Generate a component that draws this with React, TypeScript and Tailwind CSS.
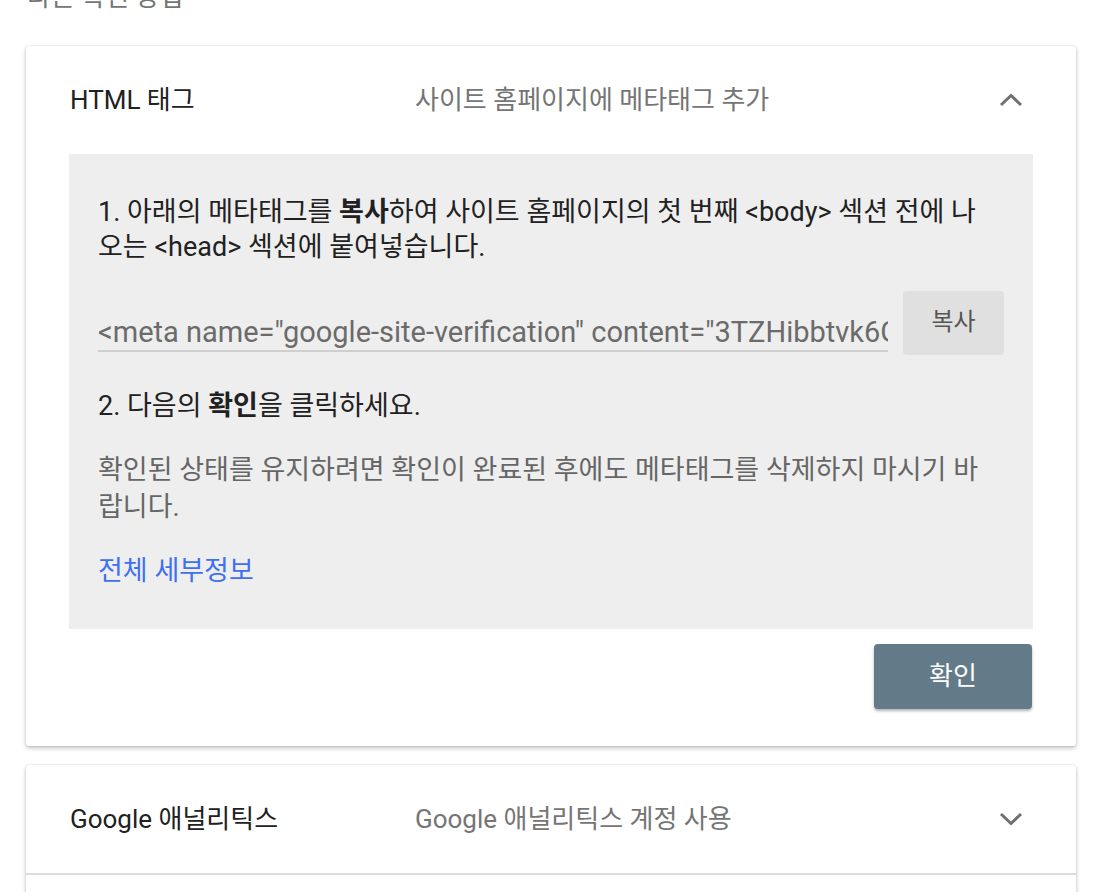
const font = "font-['Roboto','Noto_Sans_CJK_KR',sans-serif]";

function Chevron({ up }: { up?: boolean }) {
  return (
    <svg width="24" height="16" viewBox="0 0 24 16" className="text-[#707070]">
      <polyline
        points={up ? "2,13 12,3.5 22,13" : "2,3 12,12.5 22,3"}
        fill="none"
        stroke="currentColor"
        strokeWidth="3"
      />
    </svg>
  );
}

function CardHeader({ title, desc, open }: { title: string; desc: string; open?: boolean }) {
  return (
    <div className="flex h-[108px] items-center pl-[44px] pr-[53px]">
      <div className="w-[345px] text-[26px] text-[#212121]">{title}</div>
      <div className="flex-1 text-[26px] text-[#757575]">{desc}</div>
      <Chevron up={open} />
    </div>
  );
}

export default function App() {
  return (
    <div className={`${font} min-h-[892px] overflow-hidden bg-white`}>
      <div className="ml-[27px] mt-[-19px] text-[26px] leading-[32px] text-[#757575]">다른 확인 방법</div>

      {/* html tag */}
      <div className="ml-[26px] mt-[33px] w-[1050px] rounded-[3px] bg-white shadow-[0_2px_4px_rgba(0,0,0,0.25),0_0_2px_rgba(0,0,0,0.12)]">
        <CardHeader title="HTML 태그" desc="사이트 홈페이지에 메타태그 추가" open />
        <div className="mx-[43px] bg-[#eeeeee] pb-[40px] pl-[29px] pr-[20px] pt-[41px]">
          <p className="text-[27px] leading-[35px] text-[#212121]">
            <span className="block whitespace-nowrap">
              1. 아래의 메타태그를 <b className="font-bold">복사</b>하여 사이트 홈페이지의 첫 번째 &lt;body&gt; 섹션 전에 나
            </span>
            <span className="block whitespace-nowrap">오는 &lt;head&gt; 섹션에 붙여넣습니다.</span>
          </p>

          <div className="mt-[26px] flex items-start">
            <div className="w-[790px] overflow-hidden border-b-2 border-[#cfcfcf] pt-[24px]">
              <div className="whitespace-nowrap text-[29px] leading-[35px] text-[#6b6b6b]">
                &lt;meta name="google-site-verification" content="3TZHibbtvk6GxQp0d2LrWm8sN5vYcE1aFhT7uKj4oBz" /&gt;
              </div>
            </div>
            <button className="ml-[15px] h-[64px] w-[101px] rounded-[4px] bg-[#e0e0e0] pb-[2px] text-[24px] text-[#555]">복사</button>
          </div>

          <p className="mt-[34px] text-[27px] leading-[35px] text-[#212121]">
            2. 다음의 <b className="font-bold">확인</b>을 클릭하세요.
          </p>

          <p className="mt-[28px] text-[27px] leading-[37px] text-[#666666]">
            <span className="block whitespace-nowrap">확인된 상태를 유지하려면 확인이 완료된 후에도 메타태그를 삭제하지 마시기 바</span>
            <span className="block whitespace-nowrap">랍니다.</span>
          </p>

          <a className="mt-[28px] block text-[27px] leading-[35px] text-[#3f6ff2]">전체 세부정보</a>
        </div>
        <div className="flex justify-end pb-[37px] pr-[44px] pt-[15px]">
          <button className="h-[65px] w-[158px] rounded-[4px] bg-[#637b89] text-[26px] text-white shadow-[0_2px_3px_rgba(0,0,0,0.3)]">
            확인
          </button>
        </div>
      </div>

      {/* analytics */}
      <div className="ml-[26px] mt-[19px] w-[1050px] rounded-t-[3px] bg-white shadow-[0_2px_4px_rgba(0,0,0,0.25),0_0_2px_rgba(0,0,0,0.12)]">
        <div className="border-b-2 border-[#dcdcdc]">
          <CardHeader title="Google 애널리틱스" desc="Google 애널리틱스 계정 사용" />
        </div>
        <div className="h-[40px]" />
      </div>
    </div>
  );
}
